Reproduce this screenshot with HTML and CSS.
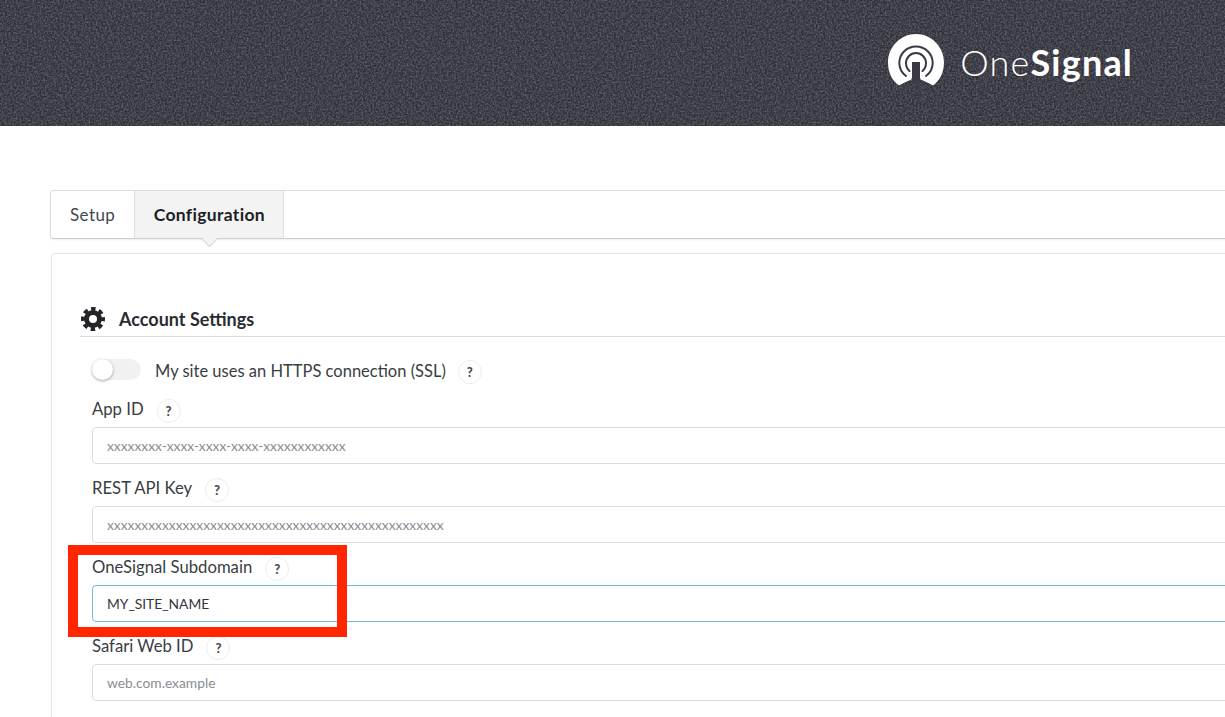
FILE: index.html
```html
<!DOCTYPE html>
<html lang="en">
<head>
<meta charset="utf-8">
<title>OneSignal Settings</title>
<link rel="stylesheet" href="styles.css">
</head>
<body>
<header class="header">
  <svg class="noise" aria-hidden="true" width="100%" height="100%">
    <filter id="grain" x="0" y="0" width="100%" height="100%">
      <feTurbulence type="fractalNoise" baseFrequency="0.55" numOctaves="2" seed="4"/>
      <feColorMatrix type="matrix" values="0 0 0 0 0.3  0 0 0 0 0.3  0 0 0 0 0.35  1 0 0 0 -0.34"/>
    </filter>
    <rect width="100%" height="100%" filter="url(#grain)"/>
  </svg>
  <div class="logo">
    <svg class="logo-mark" viewBox="0 0 56 53" width="56" height="53" aria-hidden="true">
      <path fill="#fff" d="M11 51.500 C4.200 46.500 0 38.500 0 28.500 C0 13 12.500 0 28 0 C43.500 0 56 13 56 28.500 C56 38.500 51.800 46.500 45 51.500 C41 49 36.500 47 32.500 45.500 L32.500 44 L23.500 44 L23.500 45.500 C19.500 47 15 49 11 51.500 Z"/>
      <g fill="none" stroke="#3a3a46" stroke-width="2" stroke-linecap="round">
        <path d="M18 42 C13.500 38.500 11.300 34 11.300 29 C11.300 19.800 18.800 12.500 28 12.500 C37.200 12.500 44.700 19.800 44.700 29 C44.700 34 42.500 38.500 38 42"/>
        <path d="M21.500 37 C19.300 35 18 32.300 18 29 C18 23.500 22.500 19 28 19 C33.500 19 38 23.500 38 29 C38 32.300 36.700 35 34.500 37"/>
      </g>
      <path fill="#3a3a46" d="M24 28 H32 V47 H24 Z"/>
    </svg>
    <span class="logo-text"><span class="logo-light">One</span><span class="logo-bold">Signal</span></span>
  </div>
</header>

<main class="content">
  <nav class="tabs">
    <a class="tab">Setup</a>
    <a class="tab tab-active">Configuration</a>
  </nav>

  <section class="panel">
    <h2 class="section-title">
      <svg class="gear" viewBox="0 0 24 24" width="24" height="24" aria-hidden="true">
        <g fill="none" stroke="#22242a">
          <circle cx="12" cy="12" r="6.500" stroke-width="5"/>
          <circle cx="12" cy="12" r="10" stroke-width="4" stroke-dasharray="4.400 3.454" stroke-dashoffset="2.200"/>
        </g>
      </svg>
      Account Settings
    </h2>

    <div class="toggle-row">
      <span class="toggle"><span class="toggle-knob"></span></span>
      <span class="toggle-label">My site uses an HTTPS connection (SSL)</span>
      <span class="help">?</span>
    </div>

    <div class="field">
      <label class="field-label">App ID <span class="help">?</span></label>
      <div class="input placeholder">xxxxxxxx-xxxx-xxxx-xxxx-xxxxxxxxxxxx</div>
    </div>
    <div class="field">
      <label class="field-label">REST API Key <span class="help">?</span></label>
      <div class="input placeholder">xxxxxxxxxxxxxxxxxxxxxxxxxxxxxxxxxxxxxxxxxxxxxxxxx</div>
    </div>
    <div class="field">
      <label class="field-label">OneSignal Subdomain <span class="help">?</span></label>
      <div class="input input-focus">MY_SITE_NAME</div>
    </div>
    <div class="field">
      <label class="field-label">Safari Web ID <span class="help">?</span></label>
      <div class="input placeholder">web.com.example</div>
    </div>
  </section>
</main>

<div class="highlight"></div>
</body>
</html>
```

FILE: styles.css
```css
* { box-sizing: border-box; }
html, body {
  margin: 0;
  height: 717px;
  overflow: hidden;
  background: #fff;
  font-family: "Lato", "Liberation Sans", sans-serif;
  color: #3a3d42;
}
.header {
  position: relative;
  height: 126px;
  background: #30303a;
  display: flex;
  justify-content: flex-end;
  align-items: flex-start;
  padding: 34px 92px 0 0;
}
.noise { position: absolute; inset: 0; }
.logo {
  position: relative;
  display: flex;
  align-items: center;
  gap: 16px;
  height: 53px;
}
.logo-mark { display: block; }
.logo-text { font-size: 36px; color: #fff; letter-spacing: 1.2px; margin-top: 2px; }
.logo-light { font-weight: 300; }
.logo-bold { font-weight: 700; }

.content { padding: 64px 0 0 50px; width: 1300px; }
.tabs {
  position: relative;
  display: flex;
  height: 49px;
  background: #fff;
  border: 1px solid #dcdcdc;
  border-bottom-color: #cfcfcf;
  border-radius: 4px 0 0 4px;
  box-shadow: 0 1px 2px rgba(0,0,0,.08);
}
.tab {
  display: flex;
  align-items: center;
  padding: 0 19px;
  font-size: 17px;
  color: #44474c;
  letter-spacing: 0.4px;
}
.tab-active {
  position: relative;
  padding: 0 18px 0 18.500px;
  background: #f3f3f3;
  color: #1d1f24;
  font-size: 17.5px;
  font-weight: 700;
  letter-spacing: 0.33px;
  border-left: 1px solid #dedede;
  border-right: 1px solid #dedede;
}
.tab-active::after {
  content: "";
  position: absolute;
  left: 50%;
  bottom: -7px;
  width: 10px;
  height: 10px;
  margin-left: -5px;
  background: #f3f3f3;
  border-right: 1px solid #d8d8d8;
  border-bottom: 1px solid #d8d8d8;
  transform: rotate(45deg);
}
.panel {
  margin: 14px 0 0 1px;
  padding: 50px 0 0 28px;
  height: 500px;
  border: 1px solid #e2e2e2;
  border-radius: 4px 0 0 0;
}
.section-title {
  display: flex;
  align-items: center;
  gap: 13px;
  margin: 0;
  height: 33px;
  padding: 0 0 2px 1px;
  font-size: 18px;
  font-weight: 700;
  color: #2a2c31;
  border-bottom: 1px solid #dcdcdc;
}
.gear { display: block; flex: none; margin-right: 1px; }
.toggle-row {
  display: flex;
  align-items: center;
  height: 29px;
  margin: 18px 0 0 12px;
  font-size: 16.5px;
}
.toggle {
  position: relative;
  width: 49px;
  height: 21px;
  border-radius: 11px;
  background: #f1f1f1;
  margin-right: 14px;
}
.toggle-knob {
  position: absolute;
  left: 0;
  top: 0;
  width: 21px;
  height: 21px;
  border-radius: 50%;
  background: #fff;
  box-shadow: 0 1px 3px rgba(0,0,0,.35);
}
.toggle-label { margin: 2px 12px 0 0; }
.help {
  display: inline-flex;
  align-items: center;
  justify-content: center;
  width: 24px;
  height: 24px;
  margin: 4px 0 0 8px;
  border: 1px solid #ececec;
  border-radius: 50%;
  background: #fff;
  font-size: 13px;
  font-weight: 900;
  color: #4a4d52;
}
.toggle-row .help { margin: 4px 0 0; }
.field { margin-left: 12px; }
.field-label {
  display: flex;
  align-items: center;
  gap: 5px;
  height: 43px;
  padding-top: 6px;
  font-size: 16.7px;
  color: #3a3d42;
}
.input {
  display: flex;
  align-items: center;
  height: 37px;
  padding: 0 0 1px 14px;
  border: 1px solid #dcdcdc;
  border-radius: 4px;
  font-size: 13.8px;
  color: #33363b;
  background: #fff;
}
.field + .field { margin-top: -1px; }
.placeholder { color: #8a8d92; }
.input-focus { border-color: #76b4e0; }
.highlight {
  position: absolute;
  left: 68px;
  top: 545px;
  width: 279px;
  height: 92px;
  border: 10px solid #ff2600;
}
```
